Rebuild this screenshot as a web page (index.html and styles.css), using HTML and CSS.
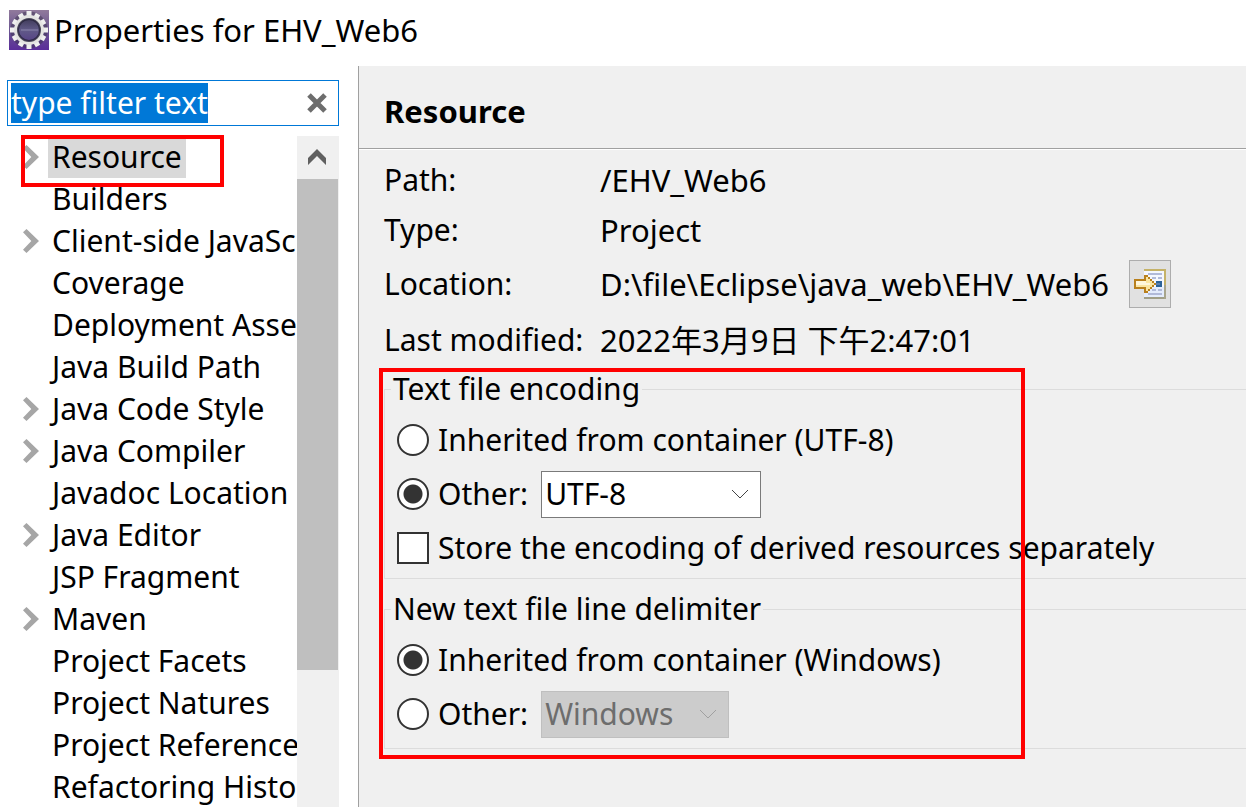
FILE: index.html
```
<!DOCTYPE html>
<html lang="en">
<head>
	<meta charset="utf-8">
	<title>Properties for EHV_Web6</title>
	<link rel="stylesheet" href="styles.css">
	<script type="text/javascript">
		window.onload=function(){
			var oFilter=document.getElementById('filter');
			oFilter.focus();
			oFilter.select();
		}
	</script>
</head>
<body>
<div class="titlebar">
	<svg class="logo" width="40" height="40" viewBox="0 0 40 40">
		<defs>
			<linearGradient id="bg" x1="0" y1="0" x2="0" y2="1">
				<stop offset="0" stop-color="#917a9c"/>
				<stop offset="0.5" stop-color="#6a5590"/>
				<stop offset="1" stop-color="#5b2d9a"/>
			</linearGradient>
			<linearGradient id="hole" x1="0" y1="0" x2="0" y2="1">
				<stop offset="0" stop-color="#3a3652"/>
				<stop offset="0.5" stop-color="#615a88"/>
				<stop offset="1" stop-color="#553f86"/>
			</linearGradient>
		</defs>
		<rect width="40" height="40" fill="url(#bg)"/>
		<circle cx="20" cy="20" r="15" fill="none" stroke="#3c3350" stroke-width="7" opacity="0.5"/>
		<g stroke="#efefef" stroke-width="5">
			<path d="M20 1V39M1 20H39"/>
			<path d="M11 4L29 36M29 4L11 36"/>
			<path d="M4 11L36 29M36 11L4 29"/>
		</g>
		<circle cx="20" cy="20" r="13" fill="url(#hole)" stroke="#e4e4e2" stroke-width="4"/>
		<circle cx="20" cy="20" r="11" fill="none" stroke="#26223a" stroke-width="2" opacity="0.8"/>
		<path d="M12 20H29" stroke="#8b86ad" stroke-width="2" opacity="0.5"/>
	</svg>
	<h1>Properties for EHV_Web6</h1>
</div>
<div class="dialog">
	<div class="sidebar">
		<div class="filter">
			<input type="text" id="filter" value="type filter text" aria-label="Filter" spellcheck="false">
			<button type="button" aria-label="Clear">
				<svg width="22" height="22" viewBox="0 0 22 22"><path d="M3 3L19 19M19 3L3 19" stroke="#6d6d6d" stroke-width="5"/></svg>
			</button>
		</div>
		<div class="tree">
			<ul class="list">
				<li class="parent current"><a href="#">Resource</a></li>
				<li><a href="#">Builders</a></li>
				<li class="parent"><a href="#">Client-side JavaScript</a></li>
				<li><a href="#">Coverage</a></li>
				<li><a href="#">Deployment Assembly</a></li>
				<li><a href="#">Java Build Path</a></li>
				<li class="parent"><a href="#">Java Code Style</a></li>
				<li class="parent"><a href="#">Java Compiler</a></li>
				<li><a href="#">Javadoc Location</a></li>
				<li class="parent"><a href="#">Java Editor</a></li>
				<li><a href="#">JSP Fragment</a></li>
				<li class="parent"><a href="#">Maven</a></li>
				<li><a href="#">Project Facets</a></li>
				<li><a href="#">Project Natures</a></li>
				<li><a href="#">Project References</a></li>
				<li><a href="#">Refactoring History</a></li>
			</ul>
			<div class="scroll">
				<button type="button" aria-label="Scroll up">
					<svg width="20" height="18" viewBox="0 0 20 18"><path d="M1 9L10 0L19 9V16L10 7L1 16Z" fill="#606060"/></svg>
				</button>
				<div class="thumb"></div>
			</div>
			<div class="mark mark-tree"></div>
		</div>
	</div>
	<div class="main">
		<h2>Resource</h2>
		<dl class="info">
			<dt>Path:</dt>
			<dd>/EHV_Web6</dd>
			<dt>Type:</dt>
			<dd>Project</dd>
			<dt>Location:</dt>
			<dd class="location">D:\file\Eclipse\java_web\EHV_Web6
				<button type="button" aria-label="Show in explorer">
					<svg width="32" height="30" viewBox="0 0 32 30" shape-rendering="crispEdges">
						<path d="M10 0H32V30H10Z" fill="#c5b268"/>
						<path d="M10 28H30V30H10Z" fill="#a19f88"/>
						<path d="M30 16H32V30H30Z" fill="#a8a58c"/>
						<path d="M10 2H30V28H10Z" fill="#f4f7ff"/>
						<path d="M10 18H30V28H10Z" fill="#e4ecfc"/>
						<path d="M14 4H28V6H14ZM18 8H22V10H18ZM24 8H28V10H24ZM18 20H22V22H18ZM24 20H28V22H24ZM14 24H28V26H14Z" fill="#b1bad9"/>
						<path d="M22 12H28V18H22Z" fill="#2c6399"/>
						<path d="M22 14H26V16H22Z" fill="#5c7fae"/>
						<path d="M0 10H10V6H14V8H16V10H18V12H20V14H22V16H20V18H18V20H16V22H14V24H10V20H0Z" fill="#b9801c"/>
						<path d="M2 12H12V8H14V10H16V12H18V14H20V16H18V18H16V20H14V22H12V18H2Z" fill="#fbe6a3"/>
						<path d="M2 12H12V14H16V16H2Z" fill="#fff7dc"/>
					</svg>
				</button>
			</dd>
			<dt>Last modified:</dt>
			<dd>2022年3月9日 下午2:47:01</dd>
		</dl>
		<form class="groups">
			<fieldset>
				<legend>Text file encoding</legend>
				<div class="row">
					<label><input type="radio" name="encoding">Inherited from container (UTF-8)</label>
				</div>
				<div class="row">
					<label><input type="radio" name="encoding" checked>Other:</label>
					<select class="encoding" aria-label="Other encoding"><option>UTF-8</option></select>
				</div>
				<div class="row">
					<label><input type="checkbox">Store the encoding of derived resources separately</label>
				</div>
			</fieldset>
			<fieldset>
				<legend>New text file line delimiter</legend>
				<div class="row">
					<label><input type="radio" name="delimiter" checked>Inherited from container (Windows)</label>
				</div>
				<div class="row">
					<label><input type="radio" name="delimiter">Other:</label>
					<select class="delimiter" aria-label="Other delimiter" disabled><option>Windows</option></select>
				</div>
			</fieldset>
			<div class="mark mark-groups"></div>
		</form>
	</div>
</div>
</body>
</html>
```
FILE: styles.css
```
*{box-sizing:border-box;}
body,h1,h2,ul,li,dl,dt,dd,fieldset,legend,input,select,button{margin:0;padding:0;}
body{display:flex;flex-direction:column;height:100vh;overflow:hidden;background:#fff;color:#000;font:30px/42px "Noto Sans","Noto Sans CJK SC",sans-serif;}
ul{list-style-type:none;}
input,select,button{font:inherit;color:inherit;border-radius:0;outline:none;}
button{display:flex;align-items:center;justify-content:center;border:0;background:none;}
a{color:inherit;text-decoration:none;}
h1,h2,dd{font-size:31px;}

.titlebar{display:flex;align-items:center;flex:none;gap:5px;height:66px;padding:0 9px 6px;}
.titlebar h1{font-weight:400;}
.dialog{display:flex;flex:1;min-height:0;}

/* left side */
.sidebar{display:flex;flex-direction:column;flex:none;width:358px;padding:14px 19px 0 7px;}
.filter{display:flex;align-items:center;flex:none;height:46px;padding:0 10px 0 3px;border:1px solid #0078d7;}
.filter input{flex:1;min-width:0;height:40px;border:0;line-height:40px;}
.filter input::selection{background:#0078d7;color:#fff;}
.tree{position:relative;display:flex;flex:1;min-height:0;margin-top:10px;}
.list{flex:1;min-width:0;overflow:hidden;}
.list li{display:flex;align-items:center;height:42px;padding-left:41px;white-space:nowrap;}
.list li.parent{padding-left:16px;}
.list li.parent:before{content:"";flex:none;width:16px;height:24px;margin-right:9px;background:#a6a6a6;clip-path:polygon(0 14%,22% 0,100% 50%,22% 100%,0 86%,52% 50%);}
.list a{padding:0 4px;}
.list li.current a{background:#d9d9d9;}
.scroll{flex:none;width:42px;background:#f0f0f0;}
.scroll button{width:40px;height:43px;}
.scroll .thumb{width:41px;height:491px;background:#bfbfbf;}

/* right side */
.main{flex:1;min-width:0;border-left:1px solid #a0a0a0;background:#f0f0f0;}
.main h2{height:83px;padding:24px 25px 0;border-bottom:1px solid #a0a0a0;line-height:42px;box-shadow:0 1px #fff;}
.info{display:grid;grid-template-columns:216px 1fr;grid-template-rows:50px 50px 58px 54px;align-items:center;padding:6px 0 1px 25px;white-space:nowrap;}
.location{display:flex;align-items:center;gap:20px;}
.location button{width:42px;height:48px;border:1px solid #adadad;background:#e1e1e1;}
.groups{position:relative;padding-left:25px;}
fieldset{min-width:0;margin-bottom:9px;padding:3px 0 3px 12px;border:1px solid #dcdcdc;border-right:0;white-space:nowrap;}
fieldset:last-of-type{padding-bottom:7px;}
legend{margin-left:-6px;padding:0 2px;}
.row{display:flex;align-items:center;gap:13px;height:54px;}
.row label{display:flex;align-items:center;gap:9px;}
.row input{appearance:none;flex:none;width:32px;height:32px;border:2px solid #333;background:#fff;}
.row input[type=radio]{border-radius:50%;}
.row input[type=radio]:checked{background:radial-gradient(circle,#333 9px,#fff 10px);}
select{appearance:none;height:47px;padding:0 3px;border:1px solid #7a7a7a;background:#fff url("data:image/svg+xml,%3Csvg xmlns='http://www.w3.org/2000/svg' width='18' height='10'%3E%3Cpath d='M1 1L9 9L17 1' fill='none' stroke='%23444'/%3E%3C/svg%3E") no-repeat right 11px center;}
select.encoding{width:220px;}
select.delimiter{width:188px;}
select:disabled{border-color:#bfbfbf;background-color:#ccc;background-image:url("data:image/svg+xml,%3Csvg xmlns='http://www.w3.org/2000/svg' width='18' height='10'%3E%3Cpath d='M1 1L9 9L17 1' fill='none' stroke='%23a0a0a0'/%3E%3C/svg%3E");color:#6d6d6d;opacity:1;}

/* red boxes */
.mark{position:absolute;border:4px solid #f00;pointer-events:none;}
.mark-tree{top:-1px;left:14px;width:203px;height:52px;}
.mark-groups{top:0;left:20px;width:646px;height:391px;}
```
